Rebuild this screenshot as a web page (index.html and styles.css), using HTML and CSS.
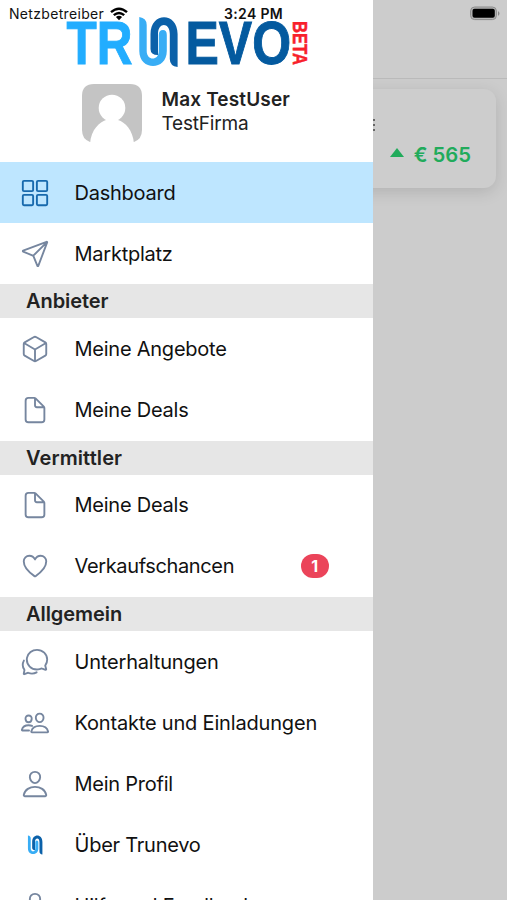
FILE: index.html
```
<!DOCTYPE html>
<html lang="de">
<head>
<meta charset="utf-8">
<title>Trunevo</title>
<link rel="stylesheet" href="styles.css">
</head>
<body>
<svg class="defs" width="0" height="0" aria-hidden="true">
  <symbol id="grid" viewBox="0 0 512 512"><rect x="48" y="48" width="176" height="176" rx="20"/><rect x="288" y="48" width="176" height="176" rx="20"/><rect x="48" y="288" width="176" height="176" rx="20"/><rect x="288" y="288" width="176" height="176" rx="20"/></symbol>
  <symbol id="plane" viewBox="0 0 512 512"><path d="M53.12 199.94l400-151.39a8 8 0 0110.33 10.33l-151.39 400a8 8 0 01-15-.34l-67.4-166.09a16 16 0 00-10.11-10.11L53.46 215a8 8 0 01-.34-15.06zM460 52L227 285"/></symbol>
  <symbol id="cube" viewBox="0 0 512 512"><path d="M448 341.37V170.61A32 32 0 00432.11 143l-152-88.46a47.94 47.94 0 00-48.24 0L79.89 143A32 32 0 0064 170.61v170.76A32 32 0 0079.89 369l152 88.46a48 48 0 0048.24 0l152-88.46A32 32 0 00448 341.37zM69 154l187 110 187-110M256 464V264"/></symbol>
  <symbol id="doc" viewBox="0 0 512 512"><path d="M416 221.25V416a48 48 0 01-48 48H144a48 48 0 01-48-48V96a48 48 0 0148-48h98.75a32 32 0 0122.62 9.37l141.26 141.26a32 32 0 019.37 22.62zM256 56v120a32 32 0 0032 32h120"/></symbol>
  <symbol id="heart" viewBox="0 0 512 512"><path d="M352.92 80C288 80 256 144 256 144s-32-64-96.92-64c-52.76 0-94.54 44.14-95.08 96.81-1.1 109.33 86.73 187.08 183 252.42a16 16 0 0018 0c96.26-65.34 184.09-143.09 183-252.42-.54-52.67-42.32-96.81-95.08-96.81z"/></symbol>
  <symbol id="chat" viewBox="0 0 512 512"><path d="M431 320.6c-1-3.6 1.2-8.6 3.3-12.2a33.68 33.68 0 012.1-3.1A162 162 0 00464 215c.3-92.2-77.5-167-173.7-167-83.9 0-153.9 57.1-170.3 132.9a160.7 160.7 0 00-3.7 34.2c0 92.3 74.8 169.1 171 169.1 15.3 0 35.9-4.6 47.2-7.7s22.5-7.2 25.4-8.3a26.44 26.44 0 019.3-1.7 26 26 0 0110.1 2l56.7 20.1a13.52 13.52 0 003.9 1 8 8 0 008-8 12.85 12.85 0 00-.5-2.7z"/><path d="M66.46 232a146.23 146.23 0 006.39 152.67c2.31 3.49 3.61 6.19 3.21 8s-11.93 61.87-11.93 61.87a8 8 0 002.71 7.68A8.17 8.17 0 0072 464a7.26 7.26 0 002.91-.6l56.21-22a15.7 15.7 0 0112 .2c18.94 7.38 39.88 12 60.83 12A159.21 159.21 0 00284 432.11"/></symbol>
  <symbol id="people" viewBox="0 0 512 512"><path d="M402 168c-2.93 40.67-33.1 72-66 72s-63.12-31.32-66-72c-3-42.31 26.37-72 66-72s69 30.46 66 72zM336 304c-65.17 0-127.84 32.37-143.54 95.41-2.08 8.34 3.15 16.59 11.72 16.59h263.65c8.57 0 13.77-8.25 11.72-16.59C463.85 335.36 401.18 304 336 304zM200 185.94c-2.34 32.48-26.72 58.06-53 58.06s-50.7-25.57-53-58.06C91.61 152.15 115.34 128 147 128s55.39 24.77 53 57.94z"/><path d="M206 306c-18.05-8.27-37.93-11.45-59-11.45-52 0-102.1 25.85-114.65 76.2-1.65 6.66 2.53 13.25 9.37 13.25H154"/></symbol>
  <symbol id="person" viewBox="0 0 512 512"><path d="M344 144c-3.92 52.87-44 96-88 96s-84.15-43.12-88-96c-4-55 35-96 88-96s92 42 88 96zM256 304c-87 0-175.3 48-191.64 138.6C62.39 453.52 68.57 464 80 464h352c11.44 0 17.62-10.48 15.65-21.4C431.3 352 343 304 256 304z"/></symbol>
</svg>
<div class="screen">
  <aside class="drawer">
    <svg class="logo" width="250" height="52" viewBox="62 16 250 52">
      <text class="word light" x="66.500" y="64" textLength="66" lengthAdjust="spacingAndGlyphs">TR</text>
      <path class="light-line" d="M139.300 17Q146.700 18 146.700 25V51C146.700 61 158.800 61 158.800 51V35Q158.800 30 163 30Q166.800 30 166.800 35V51C166.800 71 139.300 71 139.300 51Z"/>
      <path class="dark-line" d="M177.600 67Q169.800 66 169.800 59V34C169.800 22 158 22 158 34V55Q150.500 55 150.500 49V34C150.500 11.500 177.600 11.500 177.600 34Z"/>
      <text class="word dark" x="185.500" y="64" textLength="105.500" lengthAdjust="spacingAndGlyphs">EVO</text>
      <text class="beta" transform="translate(293 21) rotate(90)" x="0" y="0" textLength="44" lengthAdjust="spacingAndGlyphs">BETA</text>
    </svg>
    <section class="profile">
      <svg class="avatar" width="60" height="60" viewBox="0 0 60 60"><path d="M12 0H48Q60 0 60 12V46Q60 55 52 58H8Q0 55 0 46V12Q0 0 12 0Z" fill="#c4c4c4"/><circle cx="30" cy="24" r="13.300" fill="#fff"/><path d="M8 60C9 45 18 38 24 36V33H36V36C43 38 51 46 52 60Z" fill="#fff"/></svg>
      <div class="who"><strong class="name">Max TestUser</strong><span class="firm">TestFirma</span></div>
    </section>
    <nav class="menu">
      <a class="item active"><svg class="icon"><use href="#grid"/></svg><span>Dashboard</span></a>
      <a class="item"><svg class="icon"><use href="#plane"/></svg><span>Marktplatz</span></a>
      <h2 class="group">Anbieter</h2>
      <a class="item"><svg class="icon"><use href="#cube"/></svg><span>Meine Angebote</span></a>
      <a class="item"><svg class="icon"><use href="#doc"/></svg><span>Meine Deals</span></a>
      <h2 class="group wide">Vermittler</h2>
      <a class="item"><svg class="icon"><use href="#doc"/></svg><span>Meine Deals</span></a>
      <a class="item"><svg class="icon"><use href="#heart"/></svg><span class="tight">Verkaufschancen</span><b class="badge">1</b></a>
      <h2 class="group">Allgemein</h2>
      <a class="item"><svg class="icon"><use href="#chat"/></svg><span class="loose">Unterhaltungen</span></a>
      <a class="item"><svg class="icon"><use href="#people"/></svg><span class="loose">Kontakte und Einladungen</span></a>
      <a class="item"><svg class="icon"><use href="#person"/></svg><span>Mein Profil</span></a>
      <a class="item"><svg class="icon mark" viewBox="133 -3 50 90"><path class="light-line" d="M139.300 17Q146.700 18 146.700 25V51C146.700 61 158.800 61 158.800 51V35Q158.800 30 163 30Q166.800 30 166.800 35V51C166.800 71 139.300 71 139.300 51Z"/><path class="dark-line" d="M177.600 67Q169.800 66 169.800 59V34C169.800 22 158 22 158 34V55Q150.500 55 150.500 49V34C150.500 11.500 177.600 11.500 177.600 34Z"/></svg><span>Über Trunevo</span></a>
      <a class="item"><svg class="icon"><use href="#person"/></svg><span class="loose">Hilfe und Feedback</span></a>
    </nav>
  </aside>
  <main class="page">
    <div class="toolbar"></div>
    <div class="card">
      <span class="dots"><i></i><i></i><i></i></span>
      <div class="value"><i class="up"></i><span>€ 565</span></div>
    </div>
  </main>
  <header class="status">
    <span class="carrier">Netzbetreiber</span>
    <svg class="wifi" width="18" height="14" viewBox="0 0 18 14"><g fill="none" stroke="#000" stroke-width="2.400"><path d="M1 5.200Q9-1.800 17 5.200"/><path d="M3.800 8.200Q9 3.600 14.200 8.200"/></g><path d="M5.900 10Q9 7.600 12.100 10L9 13.200Z"/></svg>
    <span class="clock">3:24 PM</span>
    <svg class="battery" width="32" height="15" viewBox="0 0 32 15"><rect x="1.600" y="1" width="25.800" height="12.600" rx="4" fill="#b5b5b5" stroke="#8c8c8c"/><rect x="3.500" y="2.800" width="22.300" height="9" rx="2"/><path d="M29 5Q32 7.400 29 10Z" fill="#888"/></svg>
  </header>
</div>
</body>
</html>
```
FILE: styles.css
```
* { box-sizing: border-box; }
body { margin: 0; font-family: Inter, "Liberation Sans", sans-serif; color: #111; }
.defs { display: block; }
.screen { position: relative; width: 507px; height: 900px; overflow: hidden; display: flex; background: #ccc; }
.drawer { width: 372.600px; height: 900px; flex: none; background: #fff; overflow: hidden; z-index: 1; }
.logo { display: block; margin: 16px 0 0 62px; overflow: visible; }
.word { font: bold 61.500px "Liberation Sans", sans-serif; stroke-width: 1; }
.light { fill: #22adff; stroke: #22adff; }
.dark { fill: #045a9f; stroke: #045a9f; }
.light-line { fill: #38adf5; }
.dark-line { fill: #0b61a9; }
.beta { font: bold 19.500px "Liberation Sans", sans-serif; fill: #f8202b; stroke: #f8202b; stroke-width: .5; }
.profile { display: flex; height: 94px; padding: 16px 0 0 82px; }
.who { display: flex; flex-direction: column; margin: 4px 0 0 19.500px; font-size: 19px; line-height: 24.200px; color: #222; }
.name { font-weight: 600; letter-spacing: .15px; }
.firm { letter-spacing: -.2px; }
.item { display: flex; align-items: center; height: 61.100px; padding-left: 20px; font-size: 20px; letter-spacing: -.24px; white-space: nowrap; }
.tight { letter-spacing: -.36px; }
.loose { letter-spacing: -.18px; }
.active { background: #bee6ff; }
.icon { width: 30px; height: 30px; flex: none; margin-right: 24.500px; fill: none; stroke: #76869f; stroke-width: 32; stroke-linecap: round; stroke-linejoin: round; }
.active .icon { stroke: #1769ad; }
.icon.mark { stroke: none; height: 34px; }
.group { height: 34.200px; margin: 0; padding-left: 26px; background: #e6e6e6; font-size: 20px; line-height: 34px; font-weight: 600; letter-spacing: -.06px; color: #222; }
.wide { letter-spacing: .1px; }
.badge { margin: 0 44px 0 auto; width: 28px; height: 24px; border-radius: 12px; background: #eb445a; color: #fff; font-size: 16px; line-height: 24px; text-align: center; letter-spacing: 0; }
.page { flex: 1; min-width: 0; }
.toolbar { height: 79px; border-bottom: 1px solid #bababa; }
.card { height: 99px; margin: 10px 11px 0 -20px; padding: 30px 25px 0 18px; border-radius: 12px; background: #cdcdcd; box-shadow: 0 4px 16px rgba(0,0,0,.13); }
.dots { display: flex; flex-direction: column; gap: 3px; }
.dots i { width: 4px; height: 2px; background: #666; }
.value { display: flex; align-items: center; justify-content: flex-end; gap: 10px; margin-top: 11px; color: #21ab5b; font-size: 20.300px; font-weight: 600; line-height: 26px; }
.up { width: 0; height: 0; margin-bottom: 6px; border: 7px solid transparent; border-top: 0; border-bottom: 9px solid #21ab5b; }
.status { position: absolute; z-index: 2; top: 0; left: 0; width: 507px; height: 27px; display: flex; align-items: center; padding-left: 9px; font-size: 14px; color: #111; }
.carrier { width: 95px; white-space: nowrap; letter-spacing: .32px; }
.wifi { margin: 0 0 0 6px; }
.clock { margin-left: 96px; font-weight: 600; white-space: nowrap; letter-spacing: .35px; }
.battery { margin: 0 6px 0 auto; }
```
